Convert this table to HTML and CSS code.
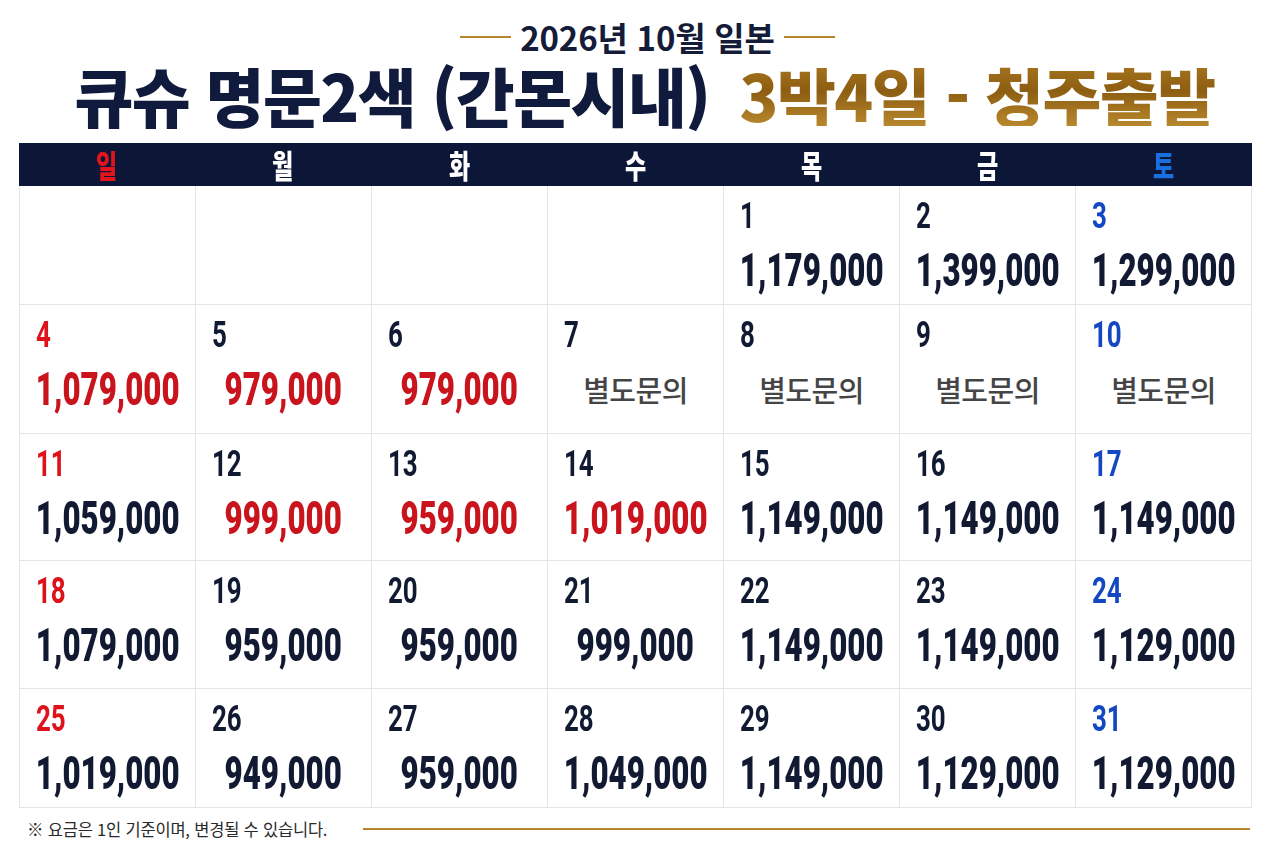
FILE: index.html
```html
<!DOCTYPE html>
<html lang="ko">
<head>
<meta charset="utf-8">
<title>2026년 10월 일본 큐슈 명문2색</title>
<link rel="stylesheet" href="styles.css">
</head>
<body>
<div class="page">
  <div class="subtitle">
    <span class="gold-rule"></span>
    <span class="subtitle-text">2026년 10월 일본</span>
    <span class="gold-rule"></span>
  </div>
  <h1 class="title">
    <span class="title-main">큐슈 명문2색 (간몬시내)</span>
    <span class="title-gold">3박4일 - 청주출발</span>
  </h1>

  <div class="week">
    <div class="wd sun"><span>일</span></div>
    <div class="wd"><span>월</span></div>
    <div class="wd"><span>화</span></div>
    <div class="wd"><span>수</span></div>
    <div class="wd"><span>목</span></div>
    <div class="wd"><span>금</span></div>
    <div class="wd sat"><span>토</span></div>
  </div>

  <div class="cal">
    <div class="cell"></div>
    <div class="cell"></div>
    <div class="cell"></div>
    <div class="cell"></div>
    <div class="cell"><div class="day"><span>1</span></div><div class="price"><span>1,179,000</span></div></div>
    <div class="cell"><div class="day"><span>2</span></div><div class="price"><span>1,399,000</span></div></div>
    <div class="cell"><div class="day sat"><span>3</span></div><div class="price"><span>1,299,000</span></div></div>

    <div class="cell"><div class="day sun"><span>4</span></div><div class="price red"><span>1,079,000</span></div></div>
    <div class="cell"><div class="day"><span>5</span></div><div class="price red"><span>979,000</span></div></div>
    <div class="cell"><div class="day"><span>6</span></div><div class="price red"><span>979,000</span></div></div>
    <div class="cell"><div class="day"><span>7</span></div><div class="price ask"><span>별도문의</span></div></div>
    <div class="cell"><div class="day"><span>8</span></div><div class="price ask"><span>별도문의</span></div></div>
    <div class="cell"><div class="day"><span>9</span></div><div class="price ask"><span>별도문의</span></div></div>
    <div class="cell"><div class="day sat"><span>10</span></div><div class="price ask"><span>별도문의</span></div></div>

    <div class="cell"><div class="day sun"><span>11</span></div><div class="price"><span>1,059,000</span></div></div>
    <div class="cell"><div class="day"><span>12</span></div><div class="price red"><span>999,000</span></div></div>
    <div class="cell"><div class="day"><span>13</span></div><div class="price red"><span>959,000</span></div></div>
    <div class="cell"><div class="day"><span>14</span></div><div class="price red"><span>1,019,000</span></div></div>
    <div class="cell"><div class="day"><span>15</span></div><div class="price"><span>1,149,000</span></div></div>
    <div class="cell"><div class="day"><span>16</span></div><div class="price"><span>1,149,000</span></div></div>
    <div class="cell"><div class="day sat"><span>17</span></div><div class="price"><span>1,149,000</span></div></div>

    <div class="cell"><div class="day sun"><span>18</span></div><div class="price"><span>1,079,000</span></div></div>
    <div class="cell"><div class="day"><span>19</span></div><div class="price"><span>959,000</span></div></div>
    <div class="cell"><div class="day"><span>20</span></div><div class="price"><span>959,000</span></div></div>
    <div class="cell"><div class="day"><span>21</span></div><div class="price"><span>999,000</span></div></div>
    <div class="cell"><div class="day"><span>22</span></div><div class="price"><span>1,149,000</span></div></div>
    <div class="cell"><div class="day"><span>23</span></div><div class="price"><span>1,149,000</span></div></div>
    <div class="cell"><div class="day sat"><span>24</span></div><div class="price"><span>1,129,000</span></div></div>

    <div class="cell"><div class="day sun"><span>25</span></div><div class="price"><span>1,019,000</span></div></div>
    <div class="cell"><div class="day"><span>26</span></div><div class="price"><span>949,000</span></div></div>
    <div class="cell"><div class="day"><span>27</span></div><div class="price"><span>959,000</span></div></div>
    <div class="cell"><div class="day"><span>28</span></div><div class="price"><span>1,049,000</span></div></div>
    <div class="cell"><div class="day"><span>29</span></div><div class="price"><span>1,149,000</span></div></div>
    <div class="cell"><div class="day"><span>30</span></div><div class="price"><span>1,129,000</span></div></div>
    <div class="cell"><div class="day sat"><span>31</span></div><div class="price"><span>1,129,000</span></div></div>
  </div>

  <div class="footer">
    <span class="note">※ 요금은 1인 기준이며, 변경될 수 있습니다.</span>
    <span class="footer-rule"></span>
  </div>
</div>
</body>
</html>
```

FILE: styles.css
```css
* { box-sizing: border-box; }

body {
  margin: 0;
  background: #ffffff;
  font-family: "Noto Sans CJK KR", "Noto Sans", sans-serif;
  color: #111a33;
}

.page {
  width: 1233px;
  margin-left: 19px;
}

.subtitle {
  height: 30px;
  margin-top: 22px;
  display: flex;
  align-items: center;
  justify-content: center;
  gap: 9px;
  padding-left: 24px;
}

.gold-rule {
  width: 51px;
  height: 2px;
  background: #b5862f;
}

.subtitle-text {
  font-size: 33px;
  font-weight: 700;
  line-height: 30px;
  color: #141c38;
  letter-spacing: -0.2px;
}

.title {
  margin: 7px 0 0;
  height: 70px;
  display: flex;
  align-items: center;
  justify-content: center;
  gap: 30px;
  font-size: 64px;
  font-weight: 900;
  line-height: 64px;
  letter-spacing: -1.5px;
  padding-left: 18px;
}

.title-main {
  color: #0f1a3d;
}

.title-gold {
  background: linear-gradient(180deg, #a8761f 0%, #8d5d12 45%, #b8882e 100%);
  -webkit-background-clip: text;
  background-clip: text;
  color: transparent;
}

.week {
  margin-top: 14px;
  height: 43px;
  background: #0c1738;
  display: grid;
  grid-template-columns: repeat(7, minmax(0, 1fr));
}

.wd {
  display: flex;
  align-items: center;
  justify-content: center;
  color: #ffffff;
  font-size: 32px;
  font-weight: 900;
  line-height: 43px;
}

.wd span {
  display: inline-block;
  transform: scaleX(0.72);
}

.wd.sun { color: #e3141c; }
.wd.sat { color: #1a6fe0; }

.cal {
  display: grid;
  grid-template-columns: repeat(7, minmax(0, 1fr));
  grid-template-rows: 119px 129px 127px 128px 119px;
  border-left: 1px solid #e5e5e8;
}

.cell {
  min-width: 0;
  border-right: 1px solid #e5e5e8;
  border-bottom: 1px solid #e5e5e8;
  padding: 12px 0 0 16px;
}

.day {
  font-family: Roboto, "Liberation Sans", sans-serif;
  font-weight: 700;
  font-size: 36px;
  line-height: 36px;
  height: 36px;
  color: #111a33;
}

.day span {
  display: inline-block;
  transform: scaleX(0.72);
  transform-origin: left center;
}

.day.sun { color: #de121b; }
.day.sat { color: #1448c2; }

.price {
  margin: 13px 0 0 -16px;
  display: flex;
  justify-content: center;
  font-family: Roboto, "Liberation Sans", sans-serif;
  font-weight: 900;
  font-size: 46px;
  line-height: 46px;
  height: 46px;
  color: #121a33;
}

.price span {
  display: inline-block;
  flex: none;
  white-space: nowrap;
  transform: scaleX(0.68);
  transform-origin: center;
}

.price.red { color: #c9131d; }

.price.ask span {
  font-family: "Noto Sans CJK KR", sans-serif;
  font-size: 29px;
  font-weight: 500;
  color: #454545;
  transform: none;
  letter-spacing: -0.5px;
}

.footer {
  height: 42px;
  display: flex;
  align-items: center;
  padding-left: 8px;
}

.note {
  font-size: 16.5px;
  color: #2a2a2a;
  letter-spacing: -0.2px;
}

.footer-rule {
  flex: 1;
  height: 2px;
  background: #b5862f;
  margin: 0 2px 0 36px;
}
```
